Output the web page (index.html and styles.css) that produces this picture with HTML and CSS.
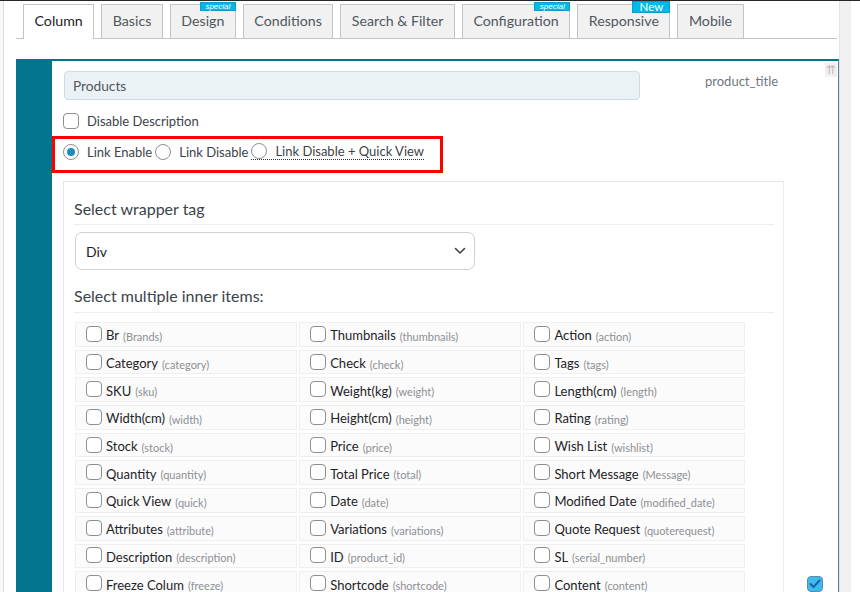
FILE: index.html
```html
<!DOCTYPE html>
<html lang="en">
<head>
<meta charset="utf-8">
<title>Column settings</title>
<link rel="stylesheet" href="styles.css">
</head>
<body>
<div class="viewport">
  <div class="gutter"></div>
  <div class="main">
    <nav class="tabs">
      <div class="tab active">Column</div>
      <div class="tab">Basics</div>
      <div class="tab">Design<span class="badge special">special</span></div>
      <div class="tab">Conditions</div>
      <div class="tab">Search &amp; Filter</div>
      <div class="tab">Configuration<span class="badge special">special</span></div>
      <div class="tab">Responsive<span class="badge new">New</span></div>
      <div class="tab">Mobile</div>
    </nav>

    <section class="panel">
      <div class="panel-side"></div>
      <div class="panel-body">
        <div class="head-row">
          <div class="title-input">Products</div>
          <div class="keyname">product_title</div>
        </div>
        <label class="check-line"><span class="cb"></span>Disable Description</label>
        <div class="link-box">
          <label class="radio-label"><span class="radio on"></span>Link Enable</label>
          <label class="radio-label"><span class="radio"></span>Link Disable</label>
          <label class="radio-label dotted"><span class="radio"></span>Link Disable + Quick View</label>
        </div>
        <div class="inner">
          <div class="section-title">Select wrapper tag</div>
          <div class="select">
            <span>Div</span>
            <svg class="chev" width="12" height="8" viewBox="0 0 12 8"><path d="M1.5 1.5 L6 6 L10.5 1.5" fill="none" stroke="#3c434a" stroke-width="1.6" stroke-linecap="round" stroke-linejoin="round"/></svg>
          </div>
          <div class="section-title second">Select multiple inner items:</div>
          <div class="items">
            <label class="item"><span class="cb"></span>Br <small>(Brands)</small></label>
            <label class="item"><span class="cb"></span>Thumbnails <small>(thumbnails)</small></label>
            <label class="item"><span class="cb"></span>Action <small>(action)</small></label>
            <label class="item"><span class="cb"></span>Category <small>(category)</small></label>
            <label class="item"><span class="cb"></span>Check <small>(check)</small></label>
            <label class="item"><span class="cb"></span>Tags <small>(tags)</small></label>
            <label class="item"><span class="cb"></span>SKU <small>(sku)</small></label>
            <label class="item"><span class="cb"></span>Weight(kg) <small>(weight)</small></label>
            <label class="item"><span class="cb"></span>Length(cm) <small>(length)</small></label>
            <label class="item"><span class="cb"></span>Width(cm) <small>(width)</small></label>
            <label class="item"><span class="cb"></span>Height(cm) <small>(height)</small></label>
            <label class="item"><span class="cb"></span>Rating <small>(rating)</small></label>
            <label class="item"><span class="cb"></span>Stock <small>(stock)</small></label>
            <label class="item"><span class="cb"></span>Price <small>(price)</small></label>
            <label class="item"><span class="cb"></span>Wish List <small>(wishlist)</small></label>
            <label class="item"><span class="cb"></span>Quantity <small>(quantity)</small></label>
            <label class="item"><span class="cb"></span>Total Price <small>(total)</small></label>
            <label class="item"><span class="cb"></span>Short Message <small>(Message)</small></label>
            <label class="item"><span class="cb"></span>Quick View <small>(quick)</small></label>
            <label class="item"><span class="cb"></span>Date <small>(date)</small></label>
            <label class="item"><span class="cb"></span>Modified Date <small>(modified_date)</small></label>
            <label class="item"><span class="cb"></span>Attributes <small>(attribute)</small></label>
            <label class="item"><span class="cb"></span>Variations <small>(variations)</small></label>
            <label class="item"><span class="cb"></span>Quote Request <small>(quoterequest)</small></label>
            <label class="item"><span class="cb"></span>Description <small>(description)</small></label>
            <label class="item"><span class="cb"></span>ID <small>(product_id)</small></label>
            <label class="item"><span class="cb"></span>SL <small>(serial_number)</small></label>
            <label class="item"><span class="cb"></span>Freeze Colum <small>(freeze)</small></label>
            <label class="item"><span class="cb"></span>Shortcode <small>(shortcode)</small></label>
            <label class="item"><span class="cb"></span>Content <small>(content)</small></label>
          </div>
        </div>
      </div>
      <span class="mover">&#8648;</span>
      <span class="cb checked corner"><svg width="12" height="10" viewBox="0 0 12 10"><path d="M1.5 5 L4.5 8 L10.5 1.5" fill="none" stroke="#1565a8" stroke-width="2" stroke-linecap="round" stroke-linejoin="round"/></svg></span>
    </section>
  </div>
  <div class="scrollbar"></div>
</div>
</body>
</html>
```
FILE: styles.css
```css
* { box-sizing: border-box; }
html, body {
  margin: 0;
  height: 592px;
  overflow: hidden;
  background: #fff;
  font-family: Lato, "Open Sans", sans-serif;
  font-size: 13px;
  color: #2c3338;
}
body { display: flex; }

.viewport {
  flex: 1;
  display: flex;
  border-top: 1px solid #23282d;
  min-width: 0;
}
.gutter {
  width: 4px;
  border-right: 1px solid #dcdcde;
  background: #f6f7f7;
}
.main {
  width: 823px;
  margin-left: 12px;
}
.scrollbar {
  width: 12px;
  background: #f0f0f1;
  border-left: 1px solid #e2e4e7;
}

/* tabs */
.tabs {
  display: flex;
  align-items: flex-end;
  gap: 7px;
  height: 38px;
  padding-left: 7px;
  border-bottom: 1px solid #c3c4c7;
  width: 821px;
}
.tab {
  position: relative;
  height: 34px;
  padding: 0 10.5px 2px;
  display: flex;
  align-items: center;
  background: #f1f1f1;
  border: 1px solid #c3c4c7;
  border-bottom: none;
  font-size: 14.2px;
  line-height: 14px;
  color: #50575e;
}
.tab.active {
  background: #fff;
  color: #1d2327;
  height: 35px;
  margin-bottom: -1px;
  padding-bottom: 3px;
}
.badge {
  position: absolute;
  right: -1px;
  color: #fff;
  background: #00b9eb;
  text-align: center;
  border: 1px solid #0a9fcf;
}
.badge.special {
  top: -3px;
  width: 36px;
  height: 9px;
  font-size: 8px;
  line-height: 7px;
  font-style: italic;
  font-family: "Liberation Sans", sans-serif;
}
.badge.new {
  top: -4px;
  width: 38px;
  height: 12px;
  font-size: 11.5px;
  line-height: 10px;
}

/* panel */
.panel {
  position: relative;
  margin-top: 20px;
  display: flex;
  border-top: 2px solid #03758d;
  border-right: 1px solid #55808e;
  min-height: 560px;
}
.panel-side {
  width: 36px;
  background: #03758d;
  flex: none;
}
.panel-body {
  flex: 1;
  padding: 10px 0 0 11px;
}
.head-row {
  display: flex;
  align-items: flex-start;
}
.title-input {
  margin-left: 1px;
  width: 576px;
  height: 29px;
  background: #eaf2f5;
  border: 1px solid #c9dee7;
  border-radius: 4px;
  padding-left: 8px;
  display: flex;
  align-items: center;
  font-size: 13.7px;
  color: #50575e;
}
.keyname {
  margin-left: 65px;
  margin-top: 2px;
  font-size: 13px;
  color: #72777c;
}
.check-line {
  display: flex;
  align-items: center;
  height: 16px;
  margin-top: 12px;
  padding-top: 1px;
  color: #3c434a;
}
.cb {
  width: 16px;
  height: 16px;
  flex: none;
  border: 1px solid #8c8f94;
  border-radius: 4px;
  background: #fff;
  margin-right: 8px;
  display: inline-flex;
  align-items: center;
  justify-content: center;
}
.link-box {
  margin-top: 8px;
  margin-left: -11px;
  width: 391px;
  height: 37px;
  border: 3px solid #ff0000;
  padding: 4px 0 0 8px;
  color: #3c434a;
  font-size: 0;
  white-space: nowrap;
}
.radio-label {
  display: inline-flex;
  align-items: center;
  height: 17px;
  font-size: 13px;
  margin-right: 3px;
  vertical-align: top;
}
.radio-label.dotted {
  border-bottom: 1px dotted #2c3338;
}
.radio {
  width: 16px;
  height: 16px;
  border: 1px solid #8c8f94;
  border-radius: 50%;
  margin-right: 8px;
  position: relative;
  background: #fff;
}
.radio.on::after {
  content: "";
  position: absolute;
  left: 3px;
  top: 3px;
  width: 8px;
  height: 8px;
  border-radius: 50%;
  background: #1e8cbe;
}

/* inner box */
.inner {
  margin-top: 8px;
  width: 721px;
  border: 1px solid #e6e6e6;
  border-right-color: #ececec;
  padding: 16px 9px 20px 10px;
}
.section-title {
  font-size: 16px;
  line-height: 22px;
  color: #3c434a;
  padding-bottom: 4px;
  border-bottom: 1px solid #eeeeee;
}
.section-title.second {
  margin-top: 15px;
  padding-bottom: 5px;
}
.select {
  margin: 7px 0 0 1px;
  width: 400px;
  height: 38px;
  border: 1px solid #d0d0d0;
  border-radius: 7px;
  display: flex;
  align-items: center;
  justify-content: space-between;
  padding: 0 8px 0 10px;
  color: #1d2327;
  font-size: 14px;
}

.items {
  margin: 9px 0 0 1px;
  display: grid;
  grid-template-columns: repeat(3, 221.5px);
  grid-auto-rows: 24.7px;
  column-gap: 2.7px;
  row-gap: 3px;
}
.item {
  display: flex;
  align-items: center;
  background: #fbfbfb;
  border: 1px solid #efefef;
  padding: 2px 0 0 10px;
  font-size: 13px;
  color: #1d2327;
  white-space: nowrap;
}
.item .cb {
  margin-right: 4px;
  margin-top: -3px;
}
.item small {
  font-size: 11px;
  color: #8c8f94;
  margin-left: 4px;
  margin-top: 2px;
}

.mover {
  position: absolute;
  right: 1px;
  top: 2px;
  width: 12px;
  height: 14px;
  background: #f0f0f1;
  color: #c9b6b9;
  font-size: 12px;
  line-height: 14px;
  text-align: center;
}
.cb.corner {
  position: absolute;
  left: 791px;
  top: 515px;
  margin: 0;
  background: #3fbaf0;
  border-color: #5f8aa6;
}
```
